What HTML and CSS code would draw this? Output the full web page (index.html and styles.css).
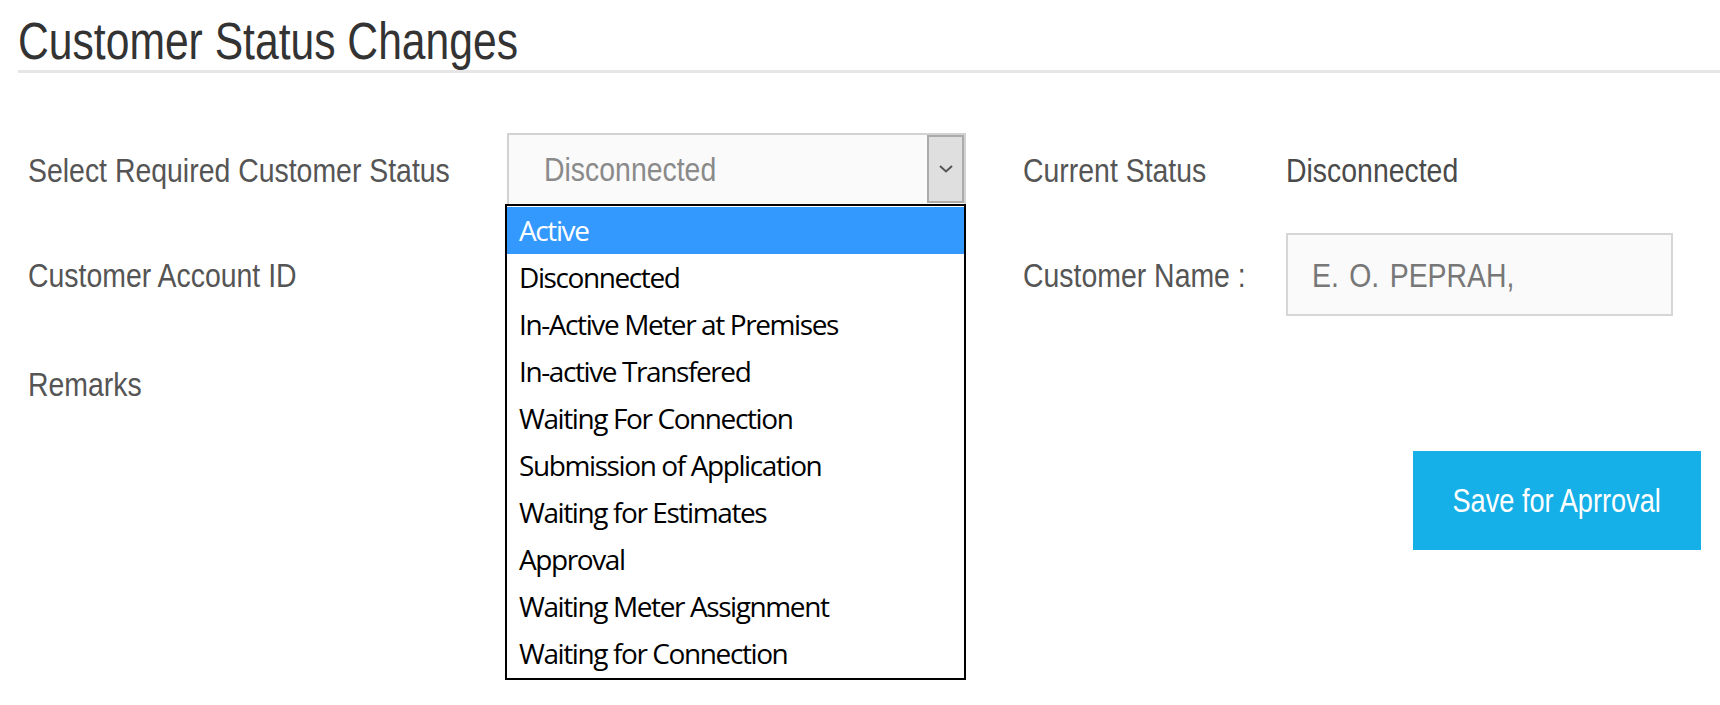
FILE: index.html
```html
<!DOCTYPE html>
<html lang="en">
<head>
<meta charset="utf-8">
<title>Customer Status Changes</title>
<link rel="stylesheet" href="styles.css">
</head>
<body>
<div class="page">
  <h1 class="title"><span class="cx">Customer Status Changes</span></h1>
  <div class="form">
    <div class="label r1 c1"><span class="cx">Select Required Customer Status</span></div>
    <div class="select r1 c2">
      <span class="select-value"><span class="cx">Disconnected</span></span>
      <span class="select-arrow">
        <svg width="16" height="10" viewBox="0 0 16 10"><polyline points="2,2 8,7.5 14,2" fill="none" stroke="#555" stroke-width="2"/></svg>
      </span>
      <ul class="options">
        <li class="option selected">Active</li>
        <li class="option">Disconnected</li>
        <li class="option">In-Active Meter at Premises</li>
        <li class="option">In-active Transfered</li>
        <li class="option">Waiting For Connection</li>
        <li class="option">Submission of Application</li>
        <li class="option">Waiting for Estimates</li>
        <li class="option">Approval</li>
        <li class="option">Waiting Meter Assignment</li>
        <li class="option">Waiting for Connection</li>
      </ul>
    </div>
    <div class="label r1 c3"><span class="cx">Current Status</span></div>
    <div class="value r1 c4"><span class="cx">Disconnected</span></div>

    <div class="label r2 c1"><span class="cx">Customer Account ID</span></div>
    <div class="label r2 c3"><span class="cx">Customer Name :</span></div>
    <div class="input r2 c4"><span class="cx">E. O. PEPRAH,</span></div>

    <div class="label r3 c1"><span class="cx">Remarks</span></div>

    <button class="btn r4 c4"><span class="cx cx-center">Save for Aprroval</span></button>
  </div>
</div>
</body>
</html>
```

FILE: styles.css
```css
* { box-sizing: border-box; }
html, body { margin: 0; padding: 0; background: #fff; }
body {
  font-family: "Liberation Sans", Arial, sans-serif;
  color: #555;
}
.page { width: 1720px; height: 705px; overflow: hidden; }

/* the reference text is horizontally condensed */
.cx {
  display: inline-block;
  transform: scaleX(0.836);
  transform-origin: 0 50%;
  white-space: nowrap;
}
.cx-center { transform-origin: 50% 50%; }

.title {
  margin: 0 0 0 18px;
  padding: 14px 0 0 0;
  font-size: 51px;
  line-height: 56px;
  font-weight: normal;
  color: #333;
  border-bottom: 3px solid #e6e6e6;
}
.form {
  margin-top: 60px;
  padding: 0 19px 0 28px;
  display: grid;
  grid-template-columns: 479px 459px 57px 263px 1fr;
  grid-template-rows: 73px 83px 81px 99px;
  row-gap: 27px;
  align-items: center;
}
.r1 { grid-row: 1; } .r2 { grid-row: 2; } .r3 { grid-row: 3; } .r4 { grid-row: 4; }
.c1 { grid-column: 1; } .c2 { grid-column: 2; } .c3 { grid-column: 4; } .c4 { grid-column: 5; }

.label, .value {
  font-size: 34px;
  line-height: 38px;
  white-space: nowrap;
}
.label { color: #555; }
.value { color: #4a4a4a; }

.select {
  position: relative;
  height: 73px;
  border: 2px solid #d2d2d2;
  background: #fafafa;
  display: flex;
  align-items: flex-start;
}
.select-value {
  flex: 1;
  min-width: 0;
  padding: 15px 0 0 35px;
  font-size: 34px;
  line-height: 38px;
  color: #8a8a8a;
  white-space: nowrap;
}
.select-arrow {
  width: 37px;
  height: 68px;
  background: #dfdfdf;
  border: 2px solid #ababab;
  display: flex;
  align-items: center;
  justify-content: center;
}
.options {
  position: absolute;
  left: -4px;
  top: 69px;
  width: 461px;
  margin: 0;
  padding: 1px 0;
  list-style: none;
  background: #fff;
  border: 2px solid #000;
  z-index: 2;
}
.option {
  height: 47px;
  line-height: 46px;
  padding-left: 12px;
  font-family: "Open Sans", "Noto Sans", sans-serif;
  font-size: 28px;
  letter-spacing: -1.4px;
  color: #000;
  white-space: nowrap;
}
.option.selected { background: #3399ff; color: #fff; }

.input {
  width: 387px;
  height: 83px;
  border: 2px solid #d6d6d6;
  background: #fafafa;
  display: flex;
  align-items: center;
  padding: 0 0 0 24px;
  font-size: 34px;
  line-height: 38px;
  word-spacing: 3px;
  color: #777;
  white-space: nowrap;
}
.btn {
  justify-self: end;
  width: 288px;
  height: 99px;
  border: 0;
  background: #15b0e8;
  color: #fff;
  font-family: inherit;
  font-size: 32.5px;
  line-height: 38px;
  padding: 0;
}
```
